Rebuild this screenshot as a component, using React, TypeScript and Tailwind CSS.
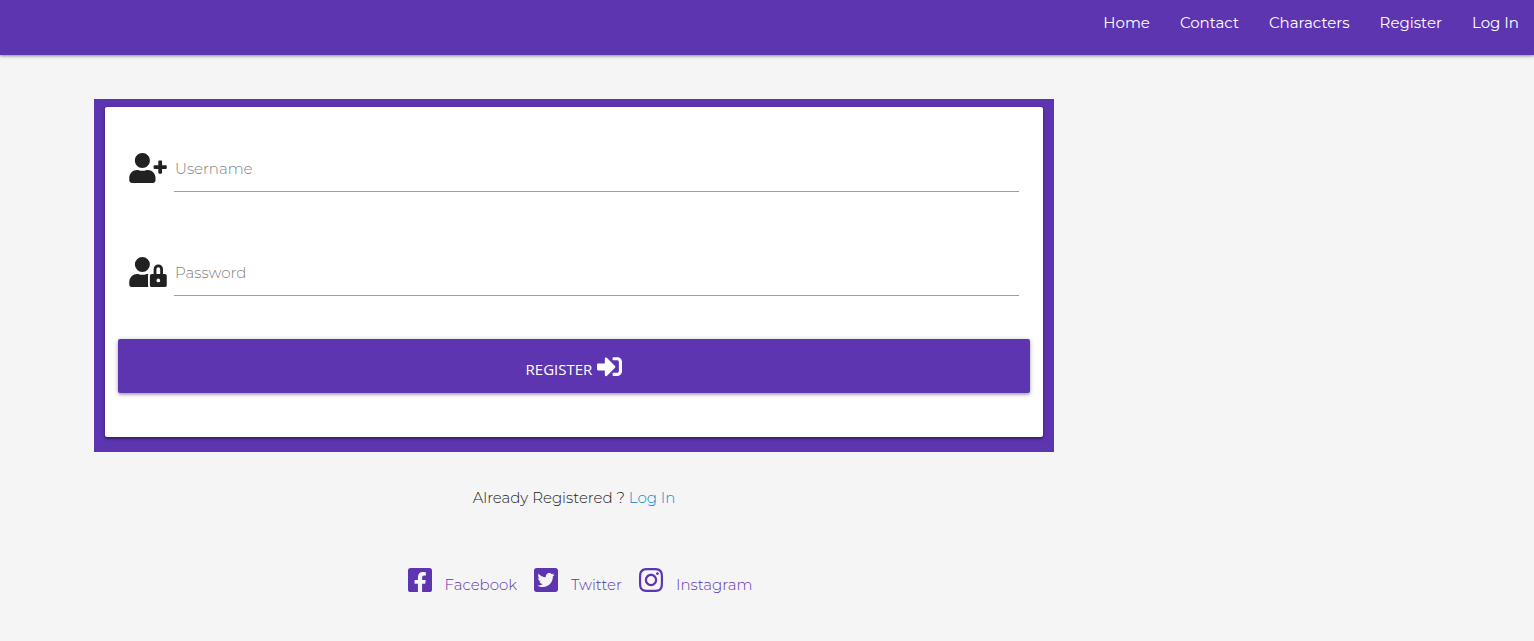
import React from "react";
import {
  FaUserPlus,
  FaUserLock,
  FaSignInAlt,
  FaFacebookSquare,
  FaTwitterSquare,
  FaInstagram,
} from "react-icons/fa";

const navLinks = ["Home", "Contact", "Characters", "Register", "Log In"];

const socials = [
  { name: "Facebook", Icon: FaFacebookSquare },
  { name: "Twitter", Icon: FaTwitterSquare },
  { name: "Instagram", Icon: FaInstagram },
];

const fields = [
  { id: "username", label: "Username", type: "text", Icon: FaUserPlus },
  { id: "password", label: "Password", type: "password", Icon: FaUserLock },
];

export default function App() {
  return (
    <div className="min-h-screen bg-[#f5f5f5] font-['Montserrat','Inter',sans-serif] text-[15px] leading-6 font-light text-[#212121]">
      <nav className="h-[55px] bg-[#5e35b1] shadow-[0_1px_3px_rgba(0,0,0,0.45)]">
        <ul className="flex justify-end gap-[30px] px-[15px] pt-[11px] font-normal text-white">
          {navLinks.map((link) => (
            <li key={link}>
              <a href="#" className="block">
                {link}
              </a>
            </li>
          ))}
        </ul>
      </nav>

      <main className="mt-11 ml-[94px] max-w-[960px]">
        <section className="bg-[#5e35b1] px-[11px] pt-2 pb-[15px]">
          <form
            className="rounded-xs bg-white px-[13px] pt-[39px] pb-11 shadow-[0_2px_2px_rgba(0,0,0,0.3),0_1px_5px_rgba(0,0,0,0.25)]"
            onSubmit={(e) => e.preventDefault()}
          >
            <div className="flex flex-col gap-[58px] px-[11px]">
              {fields.map(({ id, label, type, Icon }) => (
                <div key={id} className="flex items-start gap-[7px]">
                  <label htmlFor={id} aria-label={label} className="pt-[7px]">
                    <Icon className="h-[30px] w-[38px]" />
                  </label>
                  <input
                    id={id}
                    type={type}
                    placeholder={label}
                    className="h-[46px] min-w-0 flex-1 border-b border-[#9e9e9e] bg-transparent pl-px font-light outline-none placeholder:text-[#808080]"
                  />
                </div>
              ))}
            </div>
            <button
              type="submit"
              className="mt-[43px] flex h-[54px] w-full items-center justify-center gap-[5px] rounded-xs bg-[#5e35b1] font-['Open_Sans',sans-serif] font-normal text-white shadow-[0_2px_2px_rgba(0,0,0,0.14),0_1px_5px_rgba(0,0,0,0.3)]"
            >
              <span className="pt-1.5">REGISTER</span>
              <FaSignInAlt className="size-[25px]" />
            </button>
          </form>
        </section>

        <p className="mt-[34px] text-center">
          Already Registered ?{" "}
          <a href="#" className="text-[#0288d1]">
            Log In
          </a>
        </p>

        <footer className="mt-14 flex justify-center gap-[17px] pl-3 text-[#5e35b1]">
          {socials.map(({ name, Icon }) => (
            <a key={name} href="#" className="flex items-start gap-[13px]">
              <Icon className="h-7 w-6" />
              <span className="pt-[7px]">{name}</span>
            </a>
          ))}
        </footer>
      </main>
    </div>
  );
}
